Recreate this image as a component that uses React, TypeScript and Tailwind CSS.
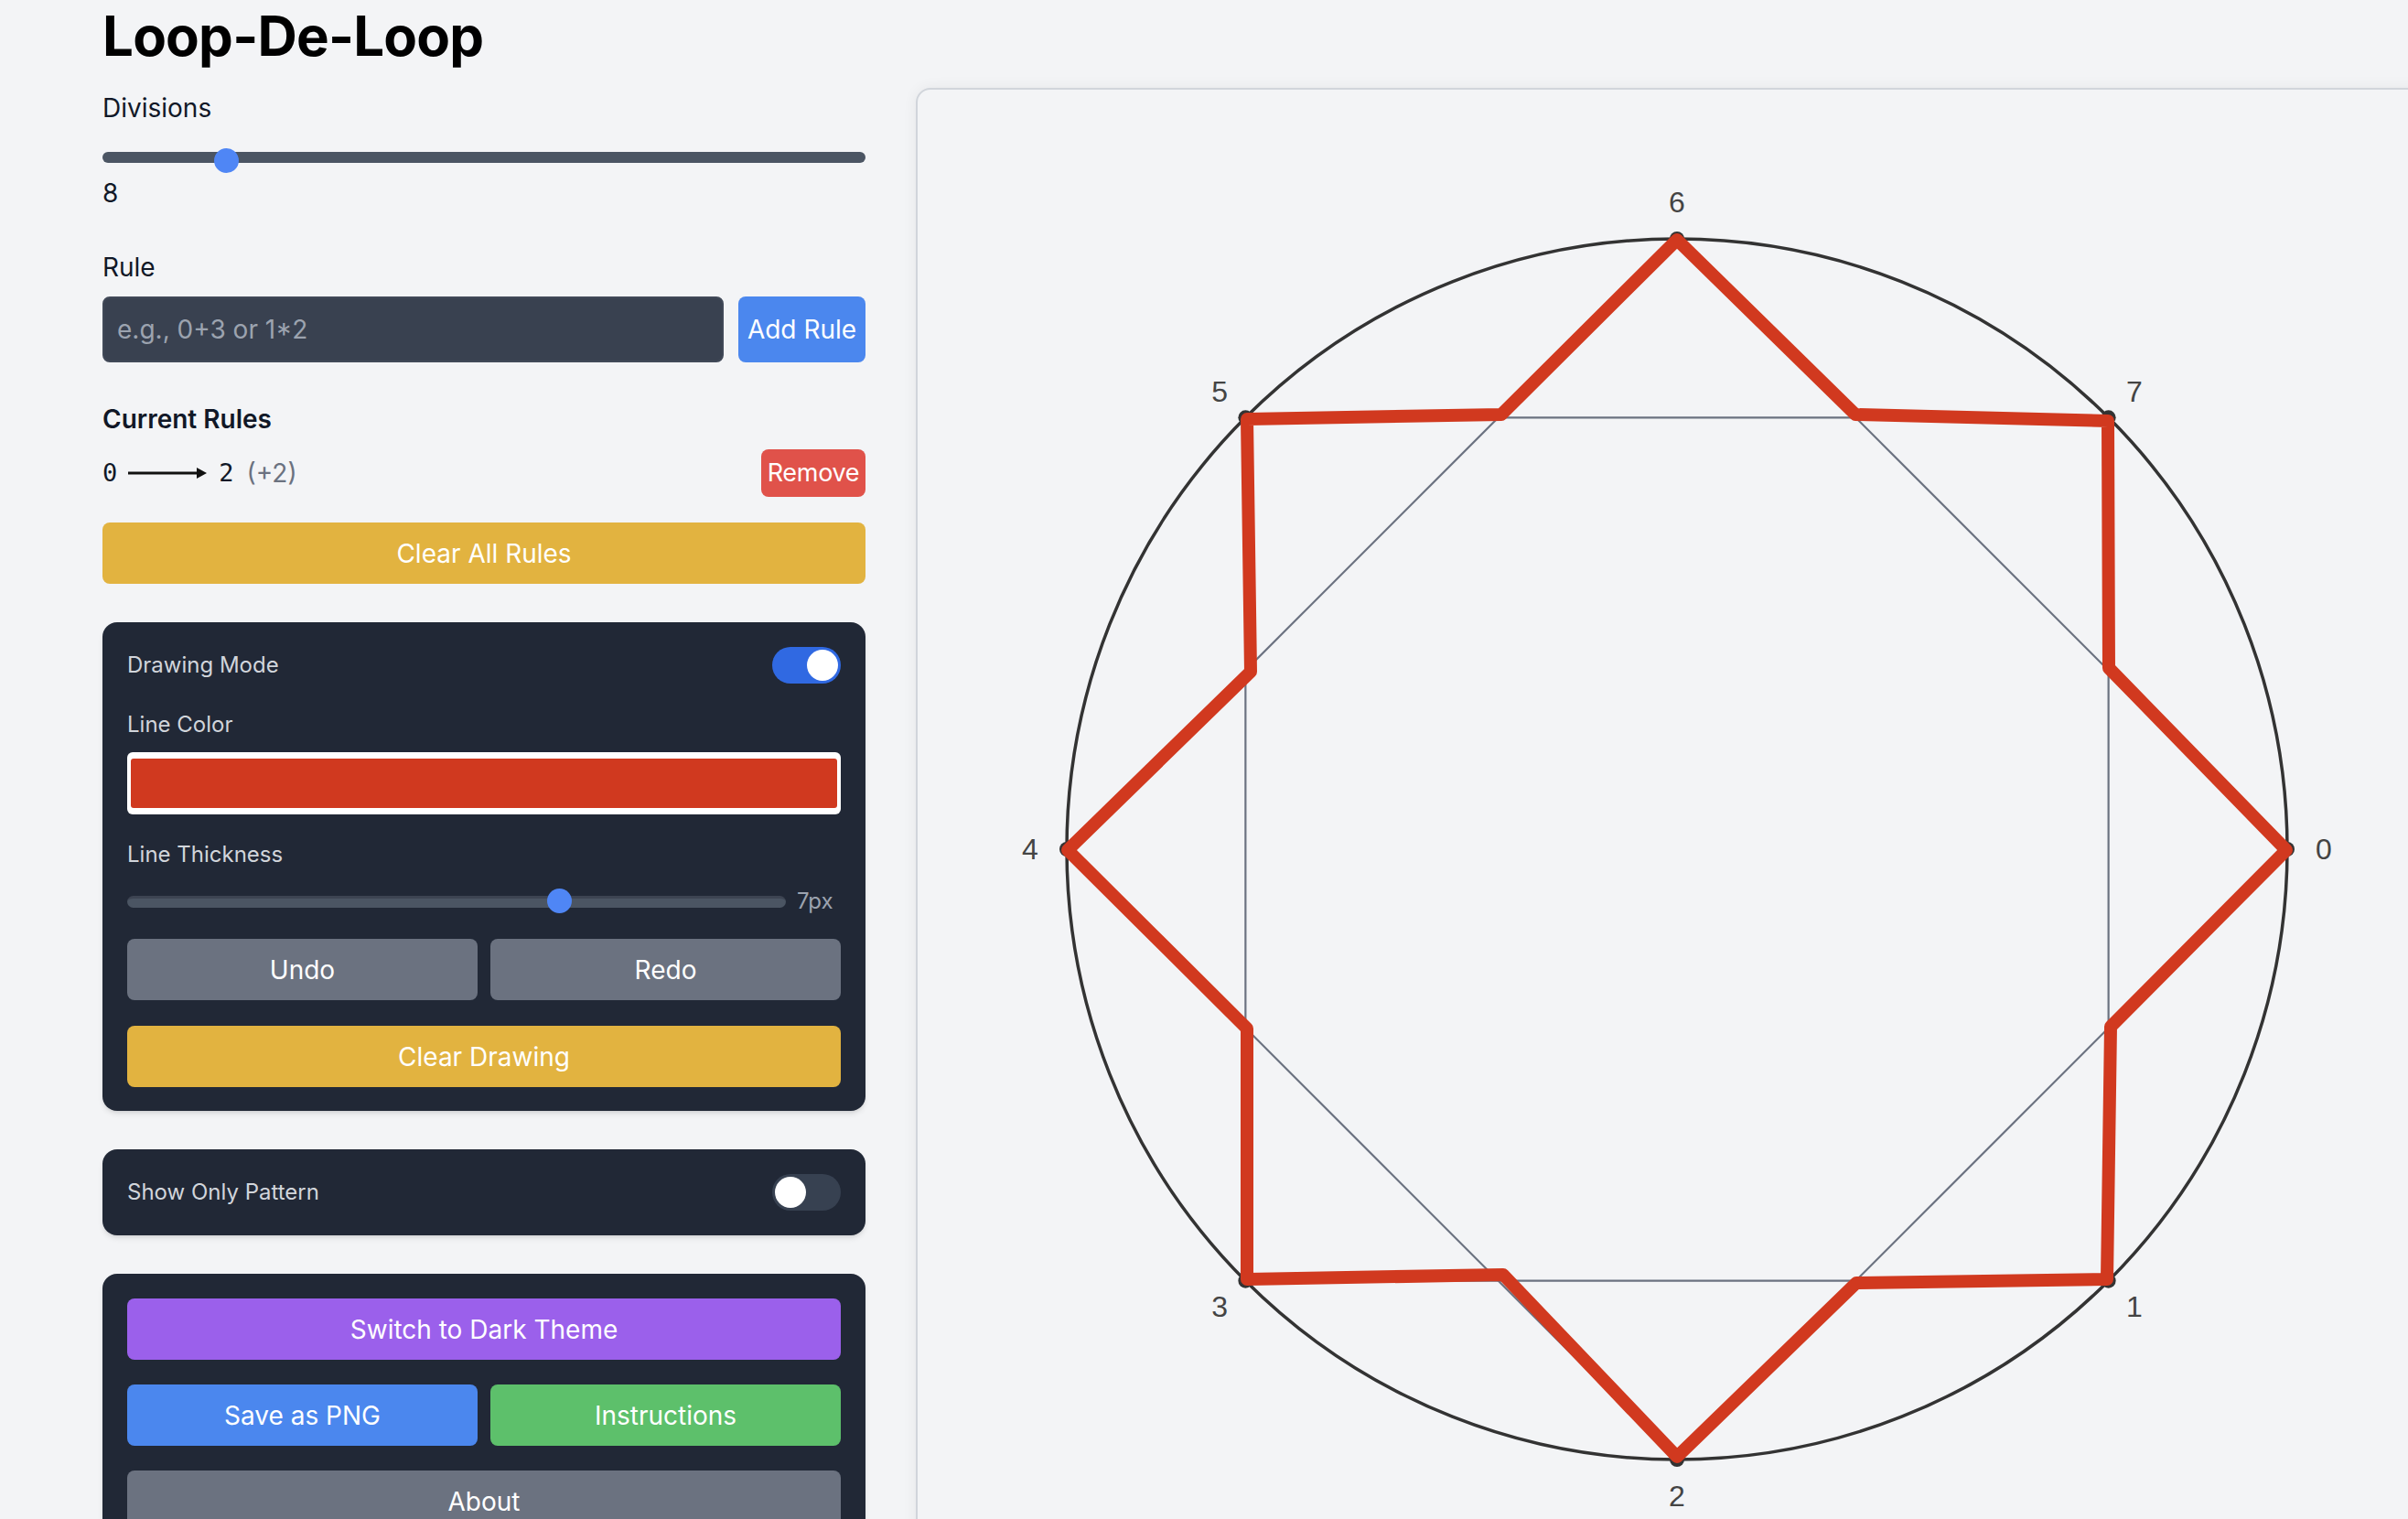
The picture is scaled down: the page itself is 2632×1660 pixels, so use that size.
import React from 'react'

// geometry of the pattern panel (panel is 1664x1664, circle centred)
const CX = 832
const CY = 832
const R = 667
const N = 8

const pts = Array.from({ length: N }, (_, i) => {
  const a = (i * 2 * Math.PI) / N
  return { x: CX + R * Math.cos(a), y: CY + R * Math.sin(a), lx: CX + (R + 40) * Math.cos(a), ly: CY + (R + 40) * Math.sin(a) }
})

// hand drawn stroke, in page coords, shifted to panel coords below
const drawn: [number, number][] = [
  [1833, 262], [2028, 453], [2304, 460], [2305, 730], [2499, 929], [2307, 1122], [2303, 1398],
  [2029, 1402], [1833, 1592], [1643, 1393], [1363, 1398], [1363, 1124], [1167, 929],
  [1367, 734], [1363, 458], [1641, 453], [1833, 262],
]
const drawnPoints = drawn.map(([x, y]) => `${x - 1001},${y - 96}`).join(' ')

function Toggle({ on }: { on: boolean }) {
  return (
    <div className={`w-[75px] h-[40px] rounded-full p-[3px] flex items-center ${on ? 'bg-[#3069e2] justify-end' : 'bg-[#374151] justify-start'}`}>
      <div className="w-[34px] h-[34px] rounded-full bg-white" />
    </div>
  )
}

function Btn({ children, className }: { children: React.ReactNode; className: string }) {
  return (
    <button className={`h-[67px] rounded-[8px] text-white text-[28px] flex items-center justify-center ${className}`}>
      {children}
    </button>
  )
}

function Pattern() {
  return (
    <svg width="1664" height="1664" viewBox="0 0 1664 1664" className="block">
      <circle cx={CX} cy={CY} r={R} fill="none" stroke="#333333" strokeWidth="3.5" />
      {pts.map((p, i) => {
        const q = pts[(i + 2) % N]
        return <line key={i} x1={p.x} y1={p.y} x2={q.x} y2={q.y} stroke="#6b7280" strokeWidth="2.2" />
      })}
      {pts.map((p, i) => (
        <circle key={'d' + i} cx={p.x} cy={p.y} r="8" fill="#333333" />
      ))}
      <polyline points={drawnPoints} fill="none" stroke="#d1391f" strokeWidth="14" strokeLinejoin="round" strokeLinecap="round" />
      {pts.map((p, i) => (
        <text key={'t' + i} x={p.lx} y={p.ly} textAnchor="middle" dominantBaseline="central"
          fontFamily="'Liberation Sans', Arial, sans-serif" fontSize="32" fill="#444444">
          {i}
        </text>
      ))}
    </svg>
  )
}

export default function App() {
  return (
    <div className="w-[2632px] h-[1660px] overflow-hidden bg-[#f3f4f6] pl-[112px] font-['Inter',sans-serif] text-[#111827]">
      <h1 className="pt-[3px] h-[75px] mb-[21px] text-[60px] leading-[72px] font-bold text-black tracking-[-0.8px]">Loop-De-Loop</h1>

      <div className="flex gap-[55px] items-start">
        {/* controls */}
        <div className="w-[834px] flex-shrink-0 flex flex-col">
          <div className="text-[28px] leading-[40px] mt-[2px]">Divisions</div>
          <div className="relative h-[28px] mt-[24px]">
            <div className="absolute left-0 right-0 top-[4px] h-[12px] rounded-full bg-[#4b5563]" />
            <div className="absolute left-[122px] top-0 w-[27px] h-[27px] rounded-full bg-[#4f86f5]" />
          </div>
          <div className="text-[28px] leading-[40px] mt-[1px]">8</div>

          <div className="text-[28px] leading-[40px] mt-[41px]">Rule</div>
          <div className="flex gap-[16px] mt-[12px]">
            <div className="flex-1 h-[72px] rounded-[8px] bg-[#394150] border-2 border-[#414958] flex items-center px-[14px] text-[28px] text-[#9ca3af]">
              e.g., 0+3 or 1*2
            </div>
            <Btn className="w-[139px] h-[72px] bg-[#4b87ee]">Add Rule</Btn>
          </div>

          <div className="text-[28px] leading-[40px] font-semibold mt-[42px]">Current Rules</div>
          <div className="flex items-center justify-between mt-[13px] h-[52px]">
            <div className="flex items-center text-[28px]">
              <span className="font-['DejaVu_Sans_Mono',monospace] text-[27px]">0</span>
              <svg width="86" height="14" viewBox="0 0 86 14" className="ml-[12px]">
                <line x1="0" y1="7" x2="78" y2="7" stroke="#111111" strokeWidth="3" />
                <polygon points="75,1 86,7 75,13" fill="#111111" />
              </svg>
              <span className="font-['DejaVu_Sans_Mono',monospace] text-[27px] ml-[13px]">2</span>
              <span className="ml-[14px] text-[#6b7280]">(+2)</span>
            </div>
            <button className="w-[114px] h-[52px] rounded-[8px] bg-[#e0524a] text-white text-[27px] tracking-[-0.3px]">Remove</button>
          </div>

          <Btn className="w-full mt-[28px] bg-[#e2b340]">Clear All Rules</Btn>

          {/* drawing card */}
          <div className="mt-[42px] rounded-[16px] bg-[#212836] px-[27px] pt-[27px] pb-[26px] text-[24px] text-[#d1d5db] shadow-md">
            <div className="flex items-center justify-between h-[40px]">
              <span>Drawing Mode</span>
              <Toggle on />
            </div>
            <div className="leading-[32px] mt-[29px]">Line Color</div>
            <div className="mt-[14px] h-[68px] rounded-[6px] bg-white px-[4px] py-[7px]">
              <div className="h-full rounded-[3px] bg-[#d0391f]" />
            </div>
            <div className="leading-[32px] mt-[28px]">Line Thickness</div>
            <div className="flex items-center h-[32px] mt-[19px] gap-[12px]">
              <div className="relative flex-1 h-[28px]">
                <div className="absolute left-0 right-0 top-[8px] h-[13px] rounded-full bg-[#4b5563] border-t-[3px] border-[#3d4452]" />
                <div className="absolute left-[459px] top-0 w-[27px] h-[27px] rounded-full bg-[#4f86f5]" />
              </div>
              <span className="w-[48px] text-[#9ca3af]">7px</span>
            </div>
            <div className="grid grid-cols-2 gap-[14px] mt-[25px]">
              <Btn className="bg-[#6b7280]">Undo</Btn>
              <Btn className="bg-[#6b7280]">Redo</Btn>
            </div>
            <Btn className="w-full mt-[28px] bg-[#e2b340]">Clear Drawing</Btn>
          </div>

          {/* pattern only */}
          <div className="mt-[42px] rounded-[16px] bg-[#212836] px-[27px] h-[94px] flex items-center justify-between text-[24px] text-[#d1d5db] shadow-md">
            <span>Show Only Pattern</span>
            <Toggle on={false} />
          </div>

          {/* actions */}
          <div className="mt-[42px] rounded-[16px] bg-[#212836] px-[27px] pt-[27px] pb-[26px] flex flex-col gap-[27px] shadow-md">
            <Btn className="w-full bg-[#9b60eb]">Switch to Dark Theme</Btn>
            <div className="grid grid-cols-2 gap-[14px]">
              <Btn className="bg-[#4b87ee]">Save as PNG</Btn>
              <Btn className="bg-[#5dc06b]">Instructions</Btn>
            </div>
            <Btn className="w-full bg-[#6b7280]">About</Btn>
          </div>
        </div>

        {/* pattern panel */}
        <div className="flex-shrink-0 w-[1664px] h-[1664px] rounded-[16px] border-2 border-[#d1d5db] bg-[#f3f4f6] shadow-[0_0_16px_rgba(0,0,0,0.06)] overflow-hidden">
          <div className="-m-[2px]">
            <Pattern />
          </div>
        </div>
      </div>
    </div>
  )
}
